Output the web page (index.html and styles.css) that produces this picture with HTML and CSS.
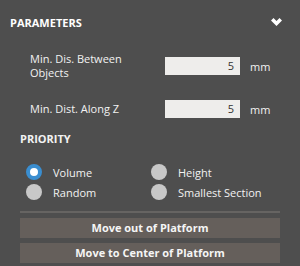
FILE: index.html
```html
<!DOCTYPE html>
<html>
<head>
<meta charset="utf-8">
<link rel="stylesheet" href="styles.css">
</head>
<body>
<div class="panel">
  <div class="header">
    <span class="title">PARAMETERS</span>
    <svg class="chevron" width="11" height="8" viewBox="0 0 11 8"><path d="M0 2.5 L2.5 0 L5.5 3 L8.5 0 L11 2.5 L5.5 8 Z" fill="#fff"/></svg>
  </div>
  <div class="field field-tall">
    <span class="label">Min. Dis. Between<br>Objects</span>
    <div class="input">5</div>
    <span class="unit">mm</span>
  </div>
  <div class="field">
    <span class="label">Min. Dist. Along Z</span>
    <div class="input">5</div>
    <span class="unit">mm</span>
  </div>
  <div class="section">PRIORITY</div>
  <div class="radios">
    <div class="radio"><span class="dot checked"></span><span>Volume</span></div>
    <div class="radio"><span class="dot"></span><span>Height</span></div>
    <div class="radio"><span class="dot"></span><span>Random</span></div>
    <div class="radio"><span class="dot"></span><span>Smallest Section</span></div>
  </div>
  <div class="divider"></div>
  <div class="button">Move out of Platform</div>
  <div class="button">Move to Center of Platform</div>
</div>
</body>
</html>
```
FILE: styles.css
```css
html, body {
  margin: 0;
  padding: 0;
  background: #4e4e4e;
}
body {
  width: 300px;
  height: 266px;
  overflow: hidden;
  font-family: "Open Sans", "Liberation Sans", sans-serif;
  font-size: 11px;
  color: #f2f2f2;
}
.panel {
  padding: 14px 0 0 0;
}
.header {
  display: flex;
  align-items: center;
  justify-content: space-between;
  padding: 0 18px 0 10px;
  height: 16px;
}
.title {
  font-weight: bold;
  color: #fff;
}
.chevron {
  display: block;
}
.field {
  display: flex;
  align-items: center;
  padding-left: 30px;
  height: 18px;
  margin-top: 20px;
}
.field-tall {
  height: 28px;
  margin-top: 22px;
}
.label {
  width: 135px;
  line-height: 14px;
}
.input {
  width: 75px;
  height: 18px;
  box-sizing: border-box;
  background: #eeedeb;
  color: #333;
  text-align: right;
  padding-right: 6px;
  line-height: 18px;
}
.unit {
  margin-left: 10px;
}
.section {
  font-weight: bold;
  padding-left: 20px;
  margin-top: 13px;
  line-height: 16px;
}
.radios {
  display: grid;
  grid-template-columns: 125px 1fr;
  row-gap: 4px;
  padding-left: 26px;
  margin-top: 17px;
}
.radio {
  display: flex;
  align-items: center;
  height: 16px;
  gap: 11px;
}
.dot {
  width: 16px;
  height: 16px;
  border-radius: 50%;
  background: #c8c8c8;
  box-sizing: border-box;
}
.dot.checked {
  background: #fff;
  border: 4px solid #3a8ed0;
}
.divider {
  margin: 11px 20px 0 20px;
  height: 2px;
  background: #666462;
}
.button {
  margin: 5px 20px 0 20px;
  height: 20px;
  line-height: 20px;
  background: #655f5b;
  text-align: center;
  font-weight: bold;
  color: #f5f5f5;
}
```
